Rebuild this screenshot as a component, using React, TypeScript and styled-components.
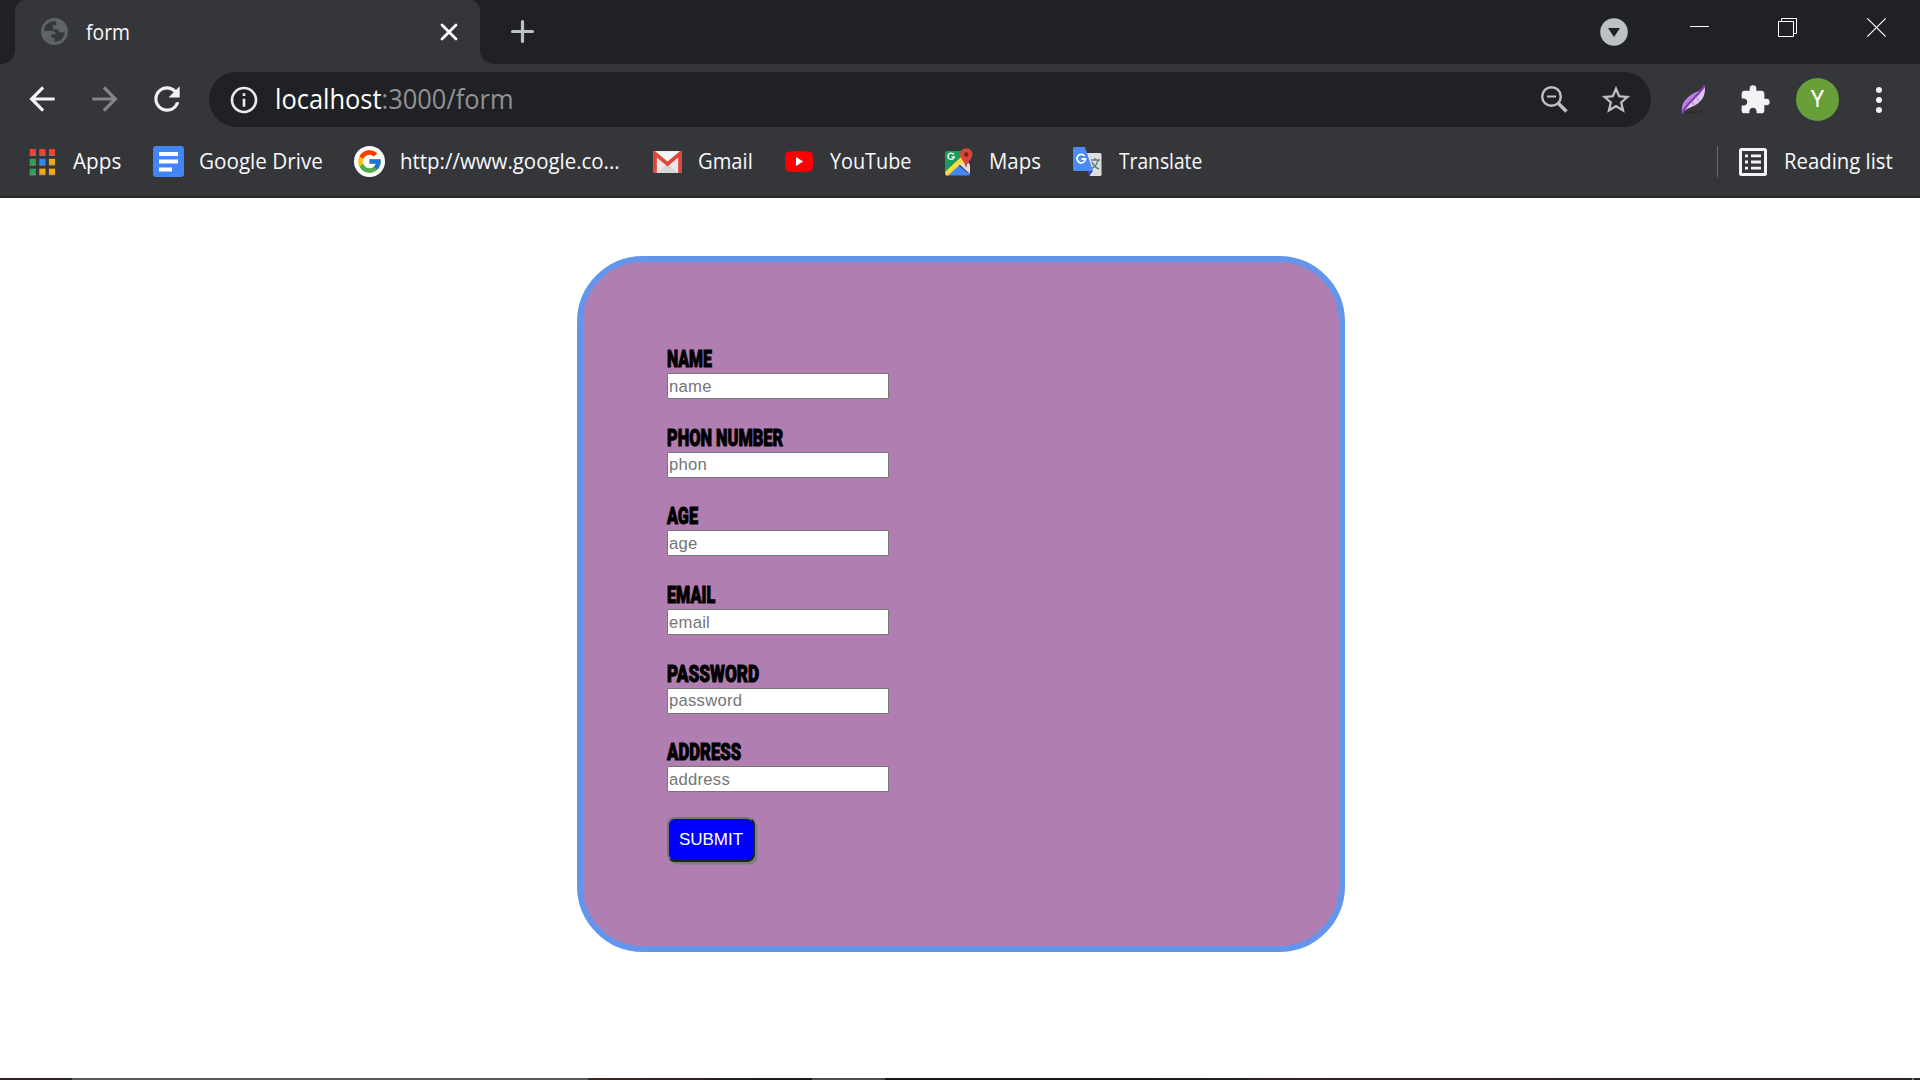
import React, { useLayoutEffect, useRef, useState } from "react";
import styled, { createGlobalStyle } from "styled-components";
import { MdArrowBack, MdArrowForward, MdExtension, MdInfoOutline, MdRefresh, MdStarBorder } from "react-icons/md";
import { FcGoogle } from "react-icons/fc";

const Global = createGlobalStyle`
  * { box-sizing: border-box; }
  body { margin: 0; background: #fff; overflow: hidden; }
  svg { display: block; flex: none; overflow: visible; }
`;

const uiFont = `"Open Sans", "Noto Sans", sans-serif`;

const Screen = styled.div`
  width: 1920px;
  height: 1080px;
  display: flex;
  flex-direction: column;
  overflow: hidden;
`;

const FitBox = styled.span<{ $w: number }>`
  display: block;
  flex: none;
  width: ${(p) => p.$w}px;
  white-space: nowrap;
`;
const FitInner = styled.span`
  display: inline-block;
  transform-origin: 0 50%;
`;

/* Condenses its text horizontally so that it fills the given width. */
function Fit({ w, children }: { w: number; children: React.ReactNode }) {
  const ref = useRef<HTMLSpanElement>(null);
  const [scale, setScale] = useState(1);
  useLayoutEffect(() => {
    if (ref.current) setScale(w / ref.current.offsetWidth);
  }, [w]);
  return (
    <FitBox $w={w}>
      <FitInner ref={ref} style={{ transform: `scaleX(${scale})` }}>{children}</FitInner>
    </FitBox>
  );
}

/* ---------- tab strip ---------- */
const TabStrip = styled.header`
  height: 64px;
  flex: none;
  display: flex;
  background: #202124;
  padding-left: 15px;
`;
const Tab = styled.div`
  position: relative;
  width: 465px;
  height: 64px;
  display: flex;
  align-items: center;
  padding: 0 22px 1px 26px;
  background: #35363a;
  border-radius: 11px 11px 0 0;
  &::before, &::after {
    content: "";
    position: absolute;
    bottom: 0;
    width: 13px;
    height: 13px;
  }
  &::before { left: -13px; background: radial-gradient(circle at 0 0, #202124 12.5px, #35363a 13px); }
  &::after { right: -13px; background: radial-gradient(circle at 100% 0, #202124 12.5px, #35363a 13px); }
`;
const TabTitle = styled.div`
  flex: 1;
  padding: 0 0 2px 17.5px;
  font: 22px/32px ${uiFont};
  color: #f8f9fa;
`;
const NewTab = styled.div`
  display: flex;
  align-items: center;
  padding: 0 0 1px 31px;
  flex: 1;
`;
const WindowTools = styled.div`
  display: flex;
  align-items: flex-start;
  padding: 18px 34px 0 0;
`;
const Tool = styled.div<{ $gap: number }>`
  margin-right: ${(p) => p.$gap}px;
`;

/* ---------- toolbar ---------- */
const Toolbar = styled.div`
  height: 71px;
  flex: none;
  display: flex;
  align-items: center;
  background: #35363a;
  padding: 0 23px 0 23px;
`;
const Nav = styled.div`
  display: flex;
  gap: 24.5px;
  width: 186px;
  padding-bottom: 1px;
  color: #f1f3f4;
`;
const Dim = styled.span`
  color: #85868a;
`;
const Omnibox = styled.div`
  width: 1442px;
  height: 55px;
  border-radius: 28px;
  background: #202124;
  display: flex;
  align-items: center;
  padding: 0 18px 0 19px;
  color: #bdbfc2;
`;
const Url = styled.div`
  flex: 1;
  padding: 0 0 1px 15px;
  font: 26.5px/40px ${uiFont};
  color: #fff;
`;
const UrlRest = styled.span`
  color: #919294;
`;
const Extensions = styled.div`
  flex: 1;
  display: flex;
  align-items: center;
  padding-left: 30px;
  color: #f1f3f4;
`;
const Avatar = styled.div`
  width: 43px;
  height: 43px;
  margin: 0 37px 0 25px;
  border-radius: 50%;
  background: #689f38;
  color: #fff;
  font: 23px/43px Roboto, sans-serif;
  text-align: center;
`;

/* ---------- bookmarks ---------- */
const Bookmarks = styled.nav`
  height: 63px;
  flex: none;
  display: flex;
  align-items: flex-start;
  background: #35363a;
  border-bottom: 2px solid #292525;
  padding: 11px 26px 0 29px;
  font: 22px/31px ${uiFont};
  color: #f8f9fa;
`;
const Bookmark = styled.div<{ $icon: number; $w: number }>`
  display: flex;
  align-items: center;
  height: 31px;
  width: ${(p) => p.$w}px;
  > svg:first-child { margin-right: ${(p) => p.$icon}px; }
  > span { margin-top: -2px; }
`;
const Divider = styled.div`
  width: 1px;
  height: 31px;
  margin: 0 21px 0 auto;
  background: #6a6b6e;
`;

/* ---------- page ---------- */
const Page = styled.main`
  flex: 1;
  background: #fff;
  padding: 58px 0 0 577px;
`;
const Card = styled.form`
  width: 768px;
  height: 696px;
  border: 6px solid #6495ed;
  border-radius: 66px;
  background: #b07eb0;
  padding: 83.3px 0 0 84px;
`;
const Field = styled.div`
  height: 78.6px;
`;
const Label = styled.label`
  display: block;
  height: 28px;
  font: 900 24px/28px Roboto, sans-serif;
  color: #000;
  -webkit-text-stroke: 1px #000;
`;
const Input = styled.input`
  display: block;
  width: 222px;
  height: 26px;
  border: 1px solid #767676;
  border-radius: 1px;
  background: #fff;
  padding: 1px 1px 0;
  outline: none;
  font: 16.67px "Liberation Sans", Arial, sans-serif;
  letter-spacing: 0.25px;
  &::placeholder { color: #757575; }
`;
const Submit = styled.button`
  display: block;
  width: 88px;
  height: 45px;
  padding: 1px 0 0;
  border: 2px solid;
  border-color: #767676 #212121 #212121 #767676;
  border-radius: 8px;
  background: #00f;
  box-shadow: 2.5px 2.5px 0 #808080;
  color: #fff;
  font: 17px "Liberation Sans", Arial, sans-serif;
`;

const Taskbar = styled.footer`
  height: 2px;
  flex: none;
  display: flex;
`;
const Segment = styled.div<{ $w: number; $c: string }>`
  width: ${(p) => p.$w}px;
  background: ${(p) => p.$c};
`;

/* ---------- drawings ---------- */
const Globe = () => (
  <svg width="27" height="27" viewBox="0 0 27 27">
    <circle cx="13.5" cy="13.5" r="13.5" fill="#5f6368" />
    <path d="M13 3.200C7.500 3.400 3.300 7.600 3 12.800h7.800c2.400 0 4 1.300 4 3.500h-4.500v3.200h3.200v4.300c5.600.1 10-4.400 10.400-9.300h-3.400c-2.200 0-3.200-1.200-3.200-3H11.800V7.300h3.300V3.500z" fill="#35363a" />
  </svg>
);
const AppsIcon = () => (
  <svg width="26" height="26" viewBox="0 0 26 26">
    {["#f4402f", "#f4402f", "#f4402f", "#2e9e58", "#1f8ef5", "#f5a80c", "#2e9e58", "#f5a80c", "#f5a80c"].map((c, i) => (
      <g key={i}>
        <rect x={(i % 3) * 9.6 + 0.7} y={Math.floor(i / 3) * 9.8} width="6.2" height="6.4" fill={c} />
        <rect x={(i % 3) * 9.6 + 0.7} y={Math.floor(i / 3) * 9.8 + 5.7} width="6.2" height="1" fill="#8b8b8b" />
      </g>
    ))}
  </svg>
);
const DocIcon = () => (
  <svg width="31" height="31" viewBox="0 0 31 31">
    <rect width="31" height="31" rx="3" fill="#4285f4" />
    <path d="M6 6h19v4H6zM6 13.500h19v4H6zM6 21.500h13v4H6z" fill="#fff" />
  </svg>
);
const GoogleIcon = () => (
  <svg width="31" height="31" viewBox="0 0 31 31">
    <circle cx="15.5" cy="15.5" r="15.5" fill="#fff" />
    <FcGoogle x="2" y="2" size={27} />
  </svg>
);
const GmailIcon = () => (
  <svg width="29" height="22" viewBox="0 0 30 22" preserveAspectRatio="none">
    <rect width="30" height="22" rx="1.5" fill="#e9e9e9" />
    <path d="M15 13L4 22h22z" fill="#d6d6d6" />
    <path d="M3.500 1h23L15 11z" fill="#f5f5f5" />
    <path d="M0 1.500C0 .5 1 0 2 0l13 10.500L28 0c1 0 2 .5 2 1.500V20.500c0 1-.5 1.500-1.500 1.500H26V6.500L15 15.500 4 6.500V22H1.500C.5 22 0 21.500 0 20.500z" fill="#dc4a3e" />
  </svg>
);
const YoutubeIcon = () => (
  <svg width="28" height="21" viewBox="0 0 28 21">
    <path d="M3 .7Q14-.6 25 .7 27.500 1 27.700 4q.6 6.500 0 13-.2 3-2.700 3.300-11 1.300-22 0Q.5 20 .3 17q-.6-6.500 0-13Q.5 1 3 .7z" fill="#f00" />
    <path d="M11 6l7.200 4.500L11 15z" fill="#fff" />
  </svg>
);
const MapsIcon = () => (
  <svg width="28" height="28" viewBox="0 0 28 28">
    <path d="M2 3h19l-4 9L1 27Q0 27 0 25V5Q0 3 2 3z" fill="#1a9c5b" />
    <path d="M13 17l12 9.500-1 1H2z" fill="#4285f4" />
    <path d="M14 16l6-6 5 7v9z" fill="#dedede" />
    <path d="M0 24L16 9l3 4L3 27.500H1z" fill="#fddc3e" />
    <path d="M21 20q-1-5-4-8.500Q15 9 15 6.500a6 6 0 0 1 12.500 0q0 3-2.500 5.500-3 3.500-4 8z" fill="#db4437" />
    <circle cx="21.2" cy="6.5" r="2.2" fill="#7b231e" />
    <path d="M9 6.700A3.200 3.200 0 1 0 9.300 9H6.500" fill="none" stroke="#fff" strokeWidth="1.3" />
  </svg>
);
const TranslateIcon = () => (
  <svg width="29" height="30" viewBox="0 0 29 30">
    <path d="M12 6h15q1.500 0 1.500 1.500v20Q28.500 29 27 29H17z" fill="#dedede" />
    <path d="M18 13h9M22 11v2M25 13q-1 6-7 9M19 15q2 5 7 7" fill="none" stroke="#607d8b" strokeWidth="1.5" />
    <path d="M14 24h6l-4 5z" fill="#3049b5" />
    <path d="M1.500 0H12l8 24H1.500Q0 24 0 22.500v-21Q0 0 1.500 0z" fill="#4c8bf5" />
    <path d="M11.500 9A4.200 4.200 0 1 0 12.400 12H8.500" fill="none" stroke="#fff" strokeWidth="1.8" />
  </svg>
);
const ReadingIcon = () => (
  <svg width="28" height="28" viewBox="0 0 28 28">
    <rect x="1.5" y="1.5" width="25" height="25" rx="1" fill="none" stroke="#f1f3f4" strokeWidth="3" />
    <path d="M6 6.500h3v2.800H6zM12 6.500h10v2.800H12zM6 12.600h3v2.800H6zM12 12.600h10v2.800H12zM6 18.700h3v2.800H6zM12 18.700h10v2.800H12z" fill="#f1f3f4" />
  </svg>
);
const Feather = () => (
  <svg width="25" height="30" viewBox="0 0 26 30">
    <ellipse cx="14" cy="27.5" rx="10" ry="1.4" fill="#2b2b30" transform="rotate(-8 14 27.5)" />
    <path d="M1 29C0 20 3 15 10 10 16 6 21 6 24.500 0 25.500 8 24 13 18 18 12 22.500 5 23 1 29z" fill="#b887dd" />
    <path d="M1 29C3 20 13 14 24.500 0 25.500 8 24 13 18 18 12 22.500 5 23 1 29z" fill="#dcc6ee" />
    <path d="M1 29C5 19 15 14 24.500 0" fill="none" stroke="#8534b8" strokeWidth="2.2" />
    <path d="M4 19l3-1M8 14.500l3 1M13 10.500l2 1M18 8l1 1M13 20l-1-3M18 16l-1-3" stroke="#a266cf" strokeWidth="1" />
  </svg>
);

const fields: [string, string, number][] = [
  ["NAME", "name", 45],
  ["PHON NUMBER", "phon", 116],
  ["AGE", "age", 31],
  ["EMAIL", "email", 48],
  ["PASSWORD", "password", 92.5],
  ["ADDRESS", "address", 74.5],
];

export default function App() {
  return (
    <Screen>
      <Global />
      <TabStrip>
        <Tab>
          <Globe />
          <TabTitle><Fit w={44}>form</Fit></TabTitle>
          <svg width="18" height="18" viewBox="0 0 18 18"><path d="M2 2l14 14M16 2L2 16" stroke="#fff" strokeWidth="2.8" strokeLinecap="round" /></svg>
        </Tab>
        <NewTab>
          <svg width="23" height="23" viewBox="0 0 23 23"><path d="M11.500 1.500v20M1.500 11.500h20" stroke="#bdc1c6" strokeWidth="3.2" strokeLinecap="round" /></svg>
        </NewTab>
        <WindowTools>
          <Tool $gap={62}>
            <svg width="28" height="28" viewBox="0 0 28 28"><circle cx="14" cy="14" r="13.8" fill="#bdc1c6" /><path d="M8 10h12l-6 9z" fill="#202124" /></svg>
          </Tool>
          <Tool $gap={69}>
            <svg width="19" height="19"><path d="M0 8.500h19" stroke="#fff" /></svg>
          </Tool>
          <Tool $gap={70}>
            <svg width="19" height="19" fill="none" stroke="#fff"><path d="M.5 3.500h15v15H.5zM3.500 3V.5h15v15H16" /></svg>
          </Tool>
          <svg width="19" height="19"><path d="M.3.3l18.400 18.400M18.700.3L.3 18.700" stroke="#fff" strokeWidth="1.2" /></svg>
        </WindowTools>
      </TabStrip>

      <Toolbar>
        <Nav>
          <MdArrowBack size={38} />
          <Dim><MdArrowForward size={38} /></Dim>
          <MdRefresh size={38} />
        </Nav>
        <Omnibox>
          <MdInfoOutline size={32} color="#e8eaed" />
          <Url><Fit w={239}>localhost<UrlRest>:3000/form</UrlRest></Fit></Url>
          <svg width="27" height="27" viewBox="0 0 27 27" fill="none" stroke="#bdbfc2"><circle cx="10.5" cy="10.5" r="9.3" strokeWidth="2.4" /><path d="M17.500 17.500l8 8" strokeWidth="3.6" /><path d="M6 10.500h9" strokeWidth="2" /></svg>
          <Tool $gap={31} />
          <MdStarBorder size={34} />
        </Omnibox>
        <Extensions>
          <Feather />
          <Tool $gap={33} />
          <MdExtension size={32} />
          <Avatar>Y</Avatar>
          <svg width="6" height="26" viewBox="0 0 6 26" fill="#f1f3f4"><circle cx="3" cy="3" r="3" /><circle cx="3" cy="13" r="3" /><circle cx="3" cy="23" r="3" /></svg>
        </Extensions>
      </Toolbar>

      <Bookmarks>
        <Bookmark $icon={18} $w={124}><AppsIcon /><Fit w={48}>Apps</Fit></Bookmark>
        <Bookmark $icon={15} $w={201}><DocIcon /><Fit w={124}>Google Drive</Fit></Bookmark>
        <Bookmark $icon={15} $w={299}><GoogleIcon /><Fit w={220}>http://www.google.co...</Fit></Bookmark>
        <Bookmark $icon={16} $w={132}><GmailIcon /><Fit w={55}>Gmail</Fit></Bookmark>
        <Bookmark $icon={17} $w={160}><YoutubeIcon /><Fit w={81}>YouTube</Fit></Bookmark>
        <Bookmark $icon={16} $w={128}><MapsIcon /><Fit w={52}>Maps</Fit></Bookmark>
        <Bookmark $icon={17} $w={140}><TranslateIcon /><Fit w={83}>Translate</Fit></Bookmark>
        <Divider />
        <Bookmark $icon={17} $w={155}><ReadingIcon /><Fit w={109}>Reading list</Fit></Bookmark>
      </Bookmarks>

      <Page>
        <Card>
          {fields.map(([label, hint, w]) => (
            <Field key={hint}>
              <Label><Fit w={w}>{label}</Fit></Label>
              <Input placeholder={hint} />
            </Field>
          ))}
          <Submit type="button">SUBMIT</Submit>
        </Card>
      </Page>

      <Taskbar>
        <Segment $w={72} $c="#2b2123" />
        <Segment $w={516} $c="#5b5957" />
        <Segment $w={224} $c="linear-gradient(90deg, #3b2723, #17181b)" />
        <Segment $w={73} $c="#4c4b4c" />
        <Segment $w={1027} $c="linear-gradient(90deg, #17171a, #17171a 25%, #2f2422 40%, #2a2226)" />
        <Segment $w={2} $c="#77757a" />
        <Segment $w={6} $c="#2a2226" />
      </Taskbar>
    </Screen>
  );
}
